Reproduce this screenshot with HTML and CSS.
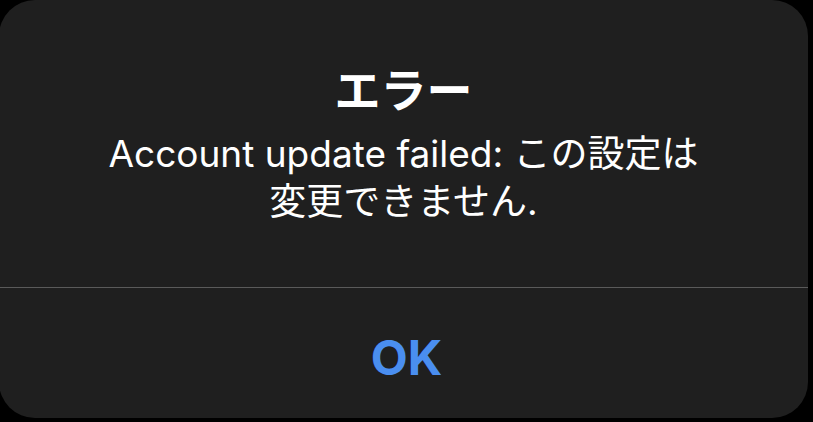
FILE: index.html
```html
<!DOCTYPE html>
<html lang="ja">
<head>
<meta charset="utf-8">
<link rel="stylesheet" href="styles.css">
</head>
<body>
<div class="screen">
  <div class="alert">
    <div class="alert-content">
      <div class="alert-title">エラー</div>
      <div class="alert-message">Account update failed: この設定は<br>変更できません.</div>
    </div>
    <div class="alert-sep"></div>
    <div class="alert-actions">
      <div class="alert-button">OK</div>
    </div>
  </div>
</div>
</body>
</html>
```
FILE: styles.css
```css
html, body {
  margin: 0;
  padding: 0;
  background: #000;
}
.screen {
  width: 813px;
  height: 422px;
  overflow: hidden;
  background: #000;
}
.alert {
  width: 809px;
  height: 418px;
  margin-left: -1px;
  background: #1f1f1f;
  border-radius: 36px;
  display: flex;
  flex-direction: column;
  font-family: Inter, "Noto Sans CJK JP", sans-serif;
  color: #fff;
  text-align: center;
}
.alert-content {
  height: 287px;
  box-sizing: border-box;
  padding-top: 62px;
}
.alert-title {
  font-size: 46px;
  font-weight: 700;
  line-height: 56px;
}
.alert-message {
  margin-top: 12px;
  font-size: 37px;
  line-height: 48px;
  font-weight: 400;
}
.alert-sep {
  height: 1px;
  background: #5a5a5a;
}
.alert-actions {
  flex: 1;
  display: flex;
  align-items: center;
  justify-content: center;
  padding-top: 8px;
}
.alert-button {
  color: #4a8ef0;
  font-size: 48px;
  font-weight: 700;
  margin-left: 6px;
}
```
